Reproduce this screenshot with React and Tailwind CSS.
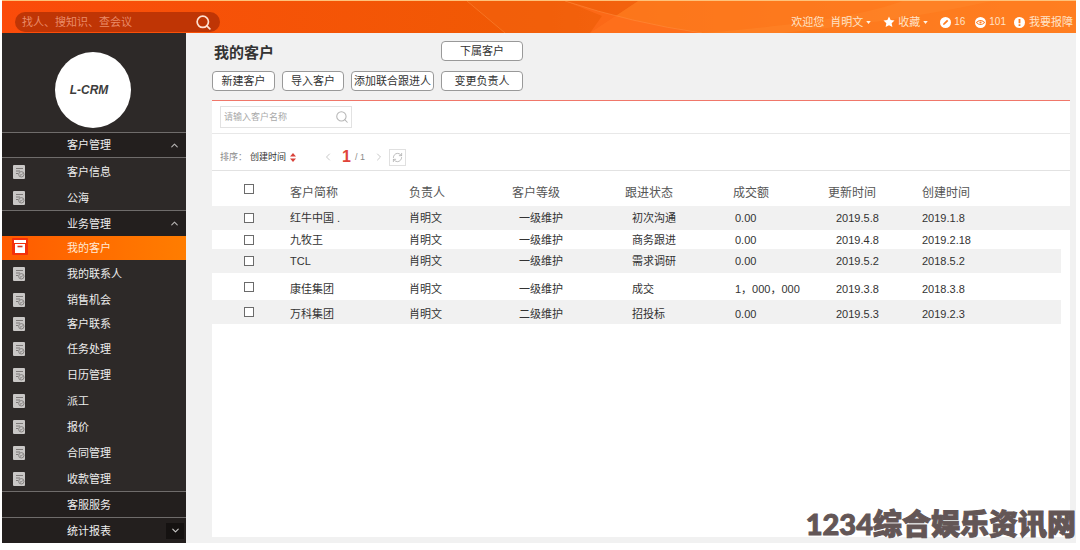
import { ChevronDown, ChevronLeft, ChevronRight, ChevronUp, RefreshCw, Search } from 'lucide-react'

const customerItems = [{ name: '客户信息' }, { name: '公海' }]

const businessItems = [
    { name: '我的客户', active: true },
    { name: '我的联系人' },
    { name: '销售机会' },
    { name: '客户联系', compact: true },
    { name: '任务处理' },
    { name: '日历管理' },
    { name: '派工' },
    { name: '报价' },
    { name: '合同管理' },
    { name: '收款管理' },
]

const rows = [
    { name: '红牛中国 .', owner: '肖明文', level: '一级维护', status: '初次沟通', amount: '0.00', updated: '2019.5.8', created: '2019.1.8', style: 'h-6 bg-[#f1f1f1]', edge: false },
    { name: '九牧王', owner: '肖明文', level: '一级维护', status: '商务跟进', amount: '0.00', updated: '2019.4.8', created: '2019.2.18', style: 'h-[19px]', edge: false },
    { name: 'TCL', owner: '肖明文', level: '一级维护', status: '需求调研', amount: '0.00', updated: '2019.5.2', created: '2018.5.2', style: 'h-6 bg-[#f1f1f1]', edge: true },
    { name: '康佳集团', owner: '肖明文', level: '一级维护', status: '成交', amount: '1，000，000', updated: '2019.3.8', created: '2018.3.8', style: 'h-[27px] *:not-first:pt-1', edge: true },
    { name: '万科集团', owner: '肖明文', level: '二级维护', status: '招投标', amount: '0.00', updated: '2019.5.3', created: '2019.2.3', style: 'h-6 bg-[#f1f1f1] *:not-first:pt-1', edge: true },
]

function DocIcon() {
    return (
        <svg viewBox="0 0 12 14" className="w-3 h-3.5 shrink-0" fill="none">
            <path d="M1 0h10a1 1 0 0 1 1 1v12a1 1 0 0 1-1 1H1a1 1 0 0 1-1-1V1a1 1 0 0 1 1-1z" fill="#c9c7c6" />
            <path d="M3 3.5h7M3 6h4M3 8.5h2" stroke="#7d7978" />
            <circle cx="8.3" cy="9.3" r="2.7" fill="#c9c7c6" stroke="#7d7978" strokeWidth="0.9" />
            <path d="M6.8 9.3l1.2 1.1 1.8-2" stroke="#7d7978" strokeWidth="0.9" />
        </svg>
    )
}

function BoxIcon() {
    return (
        <svg viewBox="0 0 16 17" className="w-4 h-[17px] shrink-0">
            <rect width="16" height="17" rx="1" fill="#f3310b" />
            <path d="M2 2h12v3H2zM3 6h10v9H3z" fill="#fff" />
            <path d="M5.5 8.5h5" stroke="#d8351b" strokeWidth="1.6" />
        </svg>
    )
}

function Caret() {
    return (
        <svg viewBox="0 0 6 4" className="w-[5px] h-[3px]">
            <path d="M0 0h6L3 4z" fill="#fff3e6" />
        </svg>
    )
}

function SideItem({ item }) {
    if (item.active) {
        return (
            <a href="#" className="flex items-center h-6 pl-2.5 bg-linear-to-r from-[#ff5a00] to-[#ff7d00] text-[#ffe9d6]">
                <span className="w-[55px] pb-1"><BoxIcon /></span>
                {item.name}
            </a>
        )
    }
    return (
        <a href="#" className={`flex items-center pl-[11px] ${item.compact ? 'h-[23px]' : 'h-[26px] pt-0.5'}`}>
            <span className="w-[54px]"><DocIcon /></span>
            {item.name}
        </a>
    )
}

function SideHeading({ title, icon, bottom }) {
    return (
        <button className={`flex items-center justify-between w-full h-[26px] pl-[65px] border-t border-[#6f6c6b] bg-[#231f1e] ${bottom ? 'border-b' : ''}`}>
            {title}
            {icon}
        </button>
    )
}

function Sidebar() {
    const up = <ChevronUp size={11} strokeWidth={2.5} className="mr-1.5 text-[#b5b3b2]" />
    return (
        <aside className="w-[184px] shrink-0 bg-[#2d2928] text-[11px] leading-4 text-[#eeeeee]">
            <div className="flex items-end justify-center h-[99px] pb-1">
                <div className="flex items-center justify-center size-[76px] rounded-full bg-white text-xs font-bold italic text-[#3c3c3c] mr-0.5 pr-2">
                    L-CRM
                </div>
            </div>
            <nav>
                <SideHeading title="客户管理" icon={up} bottom />
                {customerItems.map((item) => <SideItem key={item.name} item={item} />)}
                <SideHeading title="业务管理" icon={up} />
                {businessItems.map((item) => <SideItem key={item.name} item={item} />)}
                <SideHeading title="客服服务" />
                <SideHeading
                    title="统计报表"
                    icon={
                        <span className="flex items-center justify-center w-[18px] h-4 mr-0.5 bg-[#151211]">
                            <ChevronDown size={11} strokeWidth={2.5} className="text-[#c9c7c6]" />
                        </span>
                    }
                />
            </nav>
        </aside>
    )
}

function TopBar() {
    return (
        <header className="relative flex items-end justify-between h-[33px] border-t border-[#ffc27a] bg-linear-to-r from-[#fb4b0a] via-[#f05a04] to-[#ff8024] pl-[13px] pr-[3px]">
            <svg viewBox="0 0 1074 32" preserveAspectRatio="none" className="absolute inset-0 w-full h-full" fill="none">
                <path d="M465 0L503 32H588L636 0z" fill="#f4640f" fillOpacity="0.5" />
                <path d="M636 0L588 32H1074V0z" fill="#ff7d20" fillOpacity="0.75" />
                <path d="M563 0Q630 22 700 32H588L600 15z" fill="#ff6c1c" fillOpacity="0.7" />
                <path d="M465 0L503 32M563 0Q630 22 700 32" stroke="#ff9548" strokeOpacity="0.45" />
                <path d="M780 32Q900 20 990 0H900Q850 20 700 32z" fill="#ff8c30" fillOpacity="0.35" />
            </svg>
            <label className="relative flex items-center w-[205px] h-5 mb-px pl-[7px] pr-2 rounded-full bg-[#bf3505]">
                <input
                    type="text"
                    aria-label="搜索"
                    placeholder="找人、搜知识、查会议"
                    className="flex-1 min-w-0 text-[11px] leading-4 text-white placeholder:text-[#ea8b68] outline-none"
                />
                <Search size={17} strokeWidth={2.4} className="text-[#ffe0d0]" />
            </label>
            <div className="relative flex items-center h-[22px] text-[11px] leading-4 text-[#ffe3c8]">
                <span className="mr-1.5">欢迎您</span>
                <button className="flex items-center gap-[3px] mr-3">肖明文<Caret /></button>
                <button className="flex items-center gap-[3px] mr-3">
                    <svg viewBox="0 0 24 24" className="size-3" fill="#fff">
                        <path d="M12 1l3.3 7.2 7.7.9-5.7 5.3 1.5 7.8L12 18.4l-6.8 3.8 1.5-7.8L1 9.1l7.7-.9z" />
                    </svg>
                    收藏<Caret />
                </button>
                <a href="#" className="flex items-center gap-[3px] mr-2.5 text-[10px]">
                    <svg viewBox="0 0 12 12" className="size-[11px]">
                        <circle cx="6" cy="6" r="6" fill="#fff" />
                        <path d="M3.3 8.7l.5-1.9 3.9-3.9 1.4 1.4-3.9 3.9z" fill="#ff7d20" />
                    </svg>
                    16
                </a>
                <a href="#" className="flex items-center gap-[3px] mr-2 text-[10px]">
                    <svg viewBox="0 0 12 12" className="size-[11px]">
                        <circle cx="6" cy="6" r="6" fill="#fff" />
                        <path d="M1.5 6Q6 1.5 10.5 6Q6 10.5 1.5 6z" fill="none" stroke="#ff7d20" strokeWidth="1.1" />
                        <circle cx="6" cy="6" r="1.2" fill="#ff7d20" />
                    </svg>
                    101
                </a>
                <a href="#" className="flex items-center gap-1">
                    <svg viewBox="0 0 12 12" className="size-[11px]">
                        <circle cx="6" cy="6" r="6" fill="#fff" />
                        <path d="M5 2.3h2v4.5H5zM5 7.8h2v1.9H5z" fill="#ff7d20" />
                    </svg>
                    我要报障
                </a>
            </div>
        </header>
    )
}

function ActionButton({ children }) {
    return (
        <button className="h-5 rounded border border-[#999999] bg-white text-[11px] leading-4 text-[#333333] whitespace-nowrap">
            {children}
        </button>
    )
}

function CheckBox({ label }) {
    return (
        <input
            type="checkbox"
            aria-label={label}
            className="block appearance-none size-2.5 border border-[#6b6b6b] bg-white checked:bg-[#f05a04]"
        />
    )
}

function CustomerTable() {
    return (
        <table className="w-full table-fixed border-separate border-spacing-0 text-left text-[11px] leading-4 text-[#333333] whitespace-nowrap">
            <colgroup>
                <col className="w-[78px]" />
                <col className="w-[119px]" />
                <col className="w-[103px]" />
                <col className="w-[113px]" />
                <col className="w-[108px]" />
                <col className="w-[95px]" />
                <col className="w-[94px]" />
                <col />
            </colgroup>
            <thead>
                <tr className="h-[35px] text-xs text-[#555555] *:font-normal *:not-first:pt-2">
                    <th className="pl-8"><CheckBox label="全选" /></th>
                    <th>客户简称</th>
                    <th>负责人</th>
                    <th>客户等级</th>
                    <th>跟进状态</th>
                    <th>成交额</th>
                    <th>更新时间</th>
                    <th>创建时间</th>
                </tr>
            </thead>
            <tbody>
                {rows.map((row) => (
                    <tr key={row.name} className={row.style}>
                        <td className="pl-8"><CheckBox label={row.name} /></td>
                        <td>{row.name}</td>
                        <td>{row.owner}</td>
                        <td className="pl-[7px]">{row.level}</td>
                        <td className="pl-[7px]">{row.status}</td>
                        <td className="pl-0.5">{row.amount}</td>
                        <td className="pl-2">{row.updated}</td>
                        <td className={row.edge ? 'border-r-[9px] border-white' : ''}>{row.created}</td>
                    </tr>
                ))}
            </tbody>
        </table>
    )
}

function App() {
    return (
        <div className="relative min-h-screen bg-white pl-0.5 pr-1 font-['Liberation_Sans','Noto_Sans_CJK_SC',sans-serif]">
            <TopBar />
            <div className="flex">
                <Sidebar />
                <main className="flex flex-col flex-1 min-w-0 bg-[#f1f1f1] pt-2 pl-[26px] pr-1.5 pb-1.5">
                    <div className="grid grid-cols-[63px_62px_83px_82px] gap-x-[7px] gap-y-2.5 mb-[9px]">
                        <h1 className="col-span-3 pt-0.5 pl-0.5 text-[15px] leading-5 h-5 font-bold text-[#333333]">我的客户</h1>
                        <ActionButton>下属客户</ActionButton>
                        <ActionButton>新建客户</ActionButton>
                        <ActionButton>导入客户</ActionButton>
                        <ActionButton>添加联合跟进人</ActionButton>
                        <ActionButton>变更负责人</ActionButton>
                    </div>

                    <section className="flex-1 border-t border-[#f0776a] bg-white">
                        <div className="flex items-center h-[33px] px-2 border-b border-[#e8e8e8]">
                            <label className="flex items-center w-[132px] h-[22px] pl-[3px] pr-0.5 border border-[#e2e2e2]">
                                <input
                                    type="text"
                                    aria-label="客户名称"
                                    placeholder="请输入客户名称"
                                    className="flex-1 min-w-0 text-[9px] leading-4 placeholder:text-[#a9a9a9] outline-none"
                                />
                                <Search size={14} strokeWidth={1.8} className="text-[#b5b5b5]" />
                            </label>
                        </div>

                        <div className="flex items-center h-[37px] pt-2.5 px-2 border-b border-[#e2e2e2] text-[9px] leading-4 text-[#8a8a8a]">
                            <span className="w-[30px]">排序：</span>
                            <button className="flex items-center gap-1 text-[#333333]">
                                创建时间
                                <svg viewBox="0 0 6 9" className="w-1.5 h-[9px]" fill="#d9423a">
                                    <path d="M3 0l3 3.5H0zM3 9l3-3.5H0z" />
                                </svg>
                            </button>
                            <button aria-label="上一页" className="ml-[26px] text-[#c8c8c8]"><ChevronLeft size={12} /></button>
                            <span className="flex items-center gap-1 mx-2">
                                <b className="text-base leading-4 text-[#e0443a]">1</b>
                                <span>/ 1</span>
                            </span>
                            <button aria-label="下一页" className="text-[#c8c8c8]"><ChevronRight size={12} /></button>
                            <button aria-label="刷新" className="flex items-center justify-center size-[17px] ml-1 border border-[#e0e0e0] text-[#b0b0b0]">
                                <RefreshCw size={11} strokeWidth={1.8} />
                            </button>
                        </div>

                        <CustomerTable />
                    </section>
                </main>
            </div>

            <p className="absolute right-1 bottom-1.5 text-[29px] leading-10 font-black text-[#635656] font-['Lato','Noto_Sans_CJK_SC',sans-serif] [-webkit-text-stroke:1px_#635656]">
                1234综合娱乐资讯网
            </p>
        </div>
    )
}

export default App
